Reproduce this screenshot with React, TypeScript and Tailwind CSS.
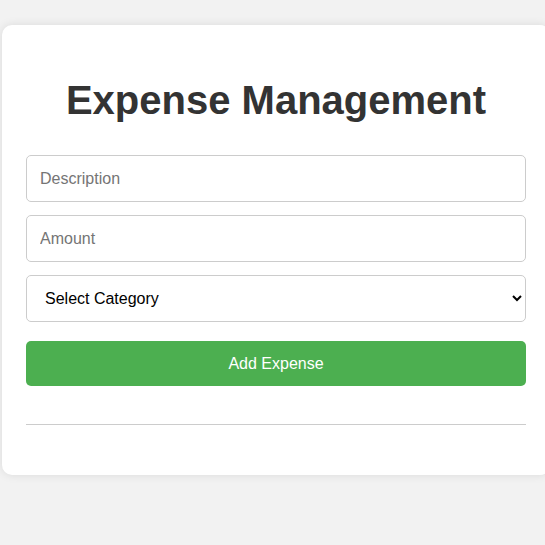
import { useState } from 'react'

const fieldClass =
  'block w-full h-[47px] border border-[#ccc] rounded-[5px] px-[13px] text-[16px] text-black bg-white outline-none placeholder:text-[#757575]'

const App = () => {
  const [description, setDescription] = useState('')
  const [amount, setAmount] = useState('')
  const [category, setCategory] = useState('')

  return (
    <div
      className="min-h-screen bg-[#f2f2f2] overflow-hidden pt-[25px] pl-[2px]"
      style={{ fontFamily: '"Liberation Sans", Arial, sans-serif' }}
    >
      <div className="w-[548px] bg-white rounded-[10px] shadow-[0_0_10px_rgba(0,0,0,0.1)] px-6 pt-[52px] pb-[50px]">
        <h1 className="text-[40px] leading-[46px] font-bold text-[#333] text-center mb-[32px]">
          Expense Management
        </h1>
        <form onSubmit={(e) => e.preventDefault()}>
          <input
            type="text"
            placeholder="Description"
            value={description}
            onChange={(e) => setDescription(e.target.value)}
            className={`${fieldClass} mb-[13px]`}
          />
          <input
            type="number"
            placeholder="Amount"
            value={amount}
            onChange={(e) => setAmount(e.target.value)}
            className={`${fieldClass} mb-[13px]`}
          />
          <select
            value={category}
            onChange={(e) => setCategory(e.target.value)}
            className={`${fieldClass} pl-[14px]`}
          >
            <option value="">Select Category</option>
            <option value="food">Food</option>
            <option value="transport">Transport</option>
            <option value="bills">Bills</option>
          </select>
          <button
            type="submit"
            className="block w-full h-[45px] mt-[19px] bg-[#4caf50] text-white text-[16px] rounded-[5px]"
          >
            Add Expense
          </button>
        </form>
        <hr className="mt-[38px] border-0 border-t border-[#ccc]" />
      </div>
    </div>
  )
}

export default App
